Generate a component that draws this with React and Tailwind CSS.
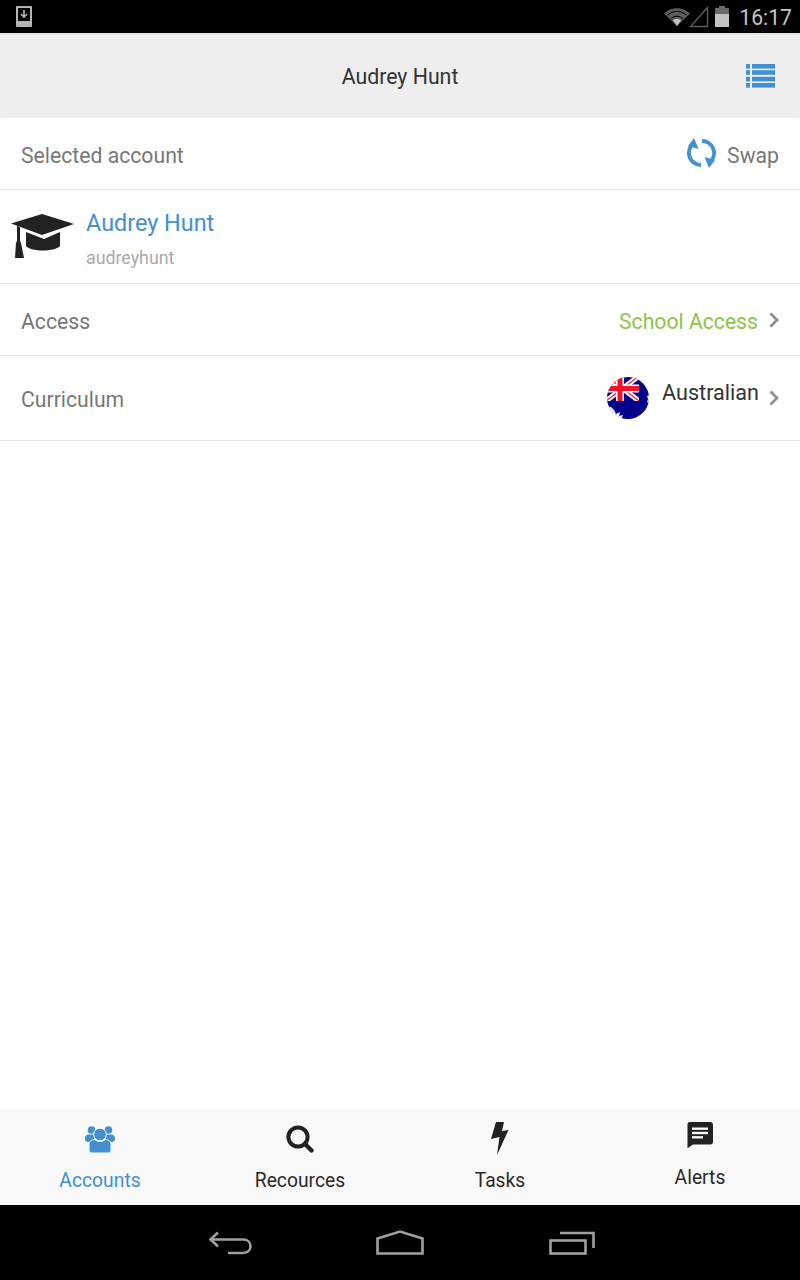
import React from "react";

const Chevron = () => (
  <svg width="12" height="18" viewBox="0 0 12 18" className="block">
    <path d="M2.5 2.5 L9 9 L2.5 15.5" fill="none" stroke="#8f8f8f" strokeWidth="2.8" />
  </svg>
);

const Flag = () => (
  <svg width="44" height="44" viewBox="0 0 44 44" className="block">
    <defs>
      <clipPath id="c"><circle cx="22" cy="22" r="21" /></clipPath>
      <clipPath id="j"><rect x="0" y="0" width="33" height="25" /></clipPath>
    </defs>
    <g clipPath="url(#c)">
      <rect width="44" height="44" fill="#00008b" />
      <g clipPath="url(#j)">
        <path d="M0 0 L33 25 M33 0 L0 25" stroke="#fff" strokeWidth="5" />
        <path d="M0 0 L33 25 M33 0 L0 25" stroke="#f0132a" strokeWidth="1.2" />
        <path d="M14 0 V25 M0 12.5 H33" stroke="#fff" strokeWidth="8" />
        <path d="M14 0 V25 M0 12.5 H33" stroke="#f0132a" strokeWidth="5" />
      </g>
      <path d="M0 30 L5 31 L8 34 L10 38 L14 36 L13 40 L17 39 L15 44 H0 Z" fill="#fff" />
      <path d="M44 19 L41 20 L42 23 L41 26 L44 27 Z" fill="#fff" />
    </g>
  </svg>
);

const Cap = () => (
  <svg width="64" height="45" viewBox="0 0 64 45" className="block">
    <path d="M31 0 L63 10 L31 21 L0 9.5 Z" fill="#222" />
    <path d="M15 18 L33 25 L49 18 V32 C44 38 20 38 15 32 Z" fill="#222" />
    <path d="M6 12 L9 13 V27 L10 29 L13 44 H4 L5 29 L6 27 Z" fill="#222" />
  </svg>
);

const Sync = () => (
  <svg width="31" height="30" viewBox="0 0 31 30" className="block">
    <path d="M15 27 A12 12 0 0 1 7 6" fill="none" stroke="#428fd1" strokeWidth="4" />
    <path d="M16 3 A12 12 0 0 1 24 24" fill="none" stroke="#428fd1" strokeWidth="4" />
    <path d="M8 0 L12.5 11 L2 8 Z" fill="#428fd1" />
    <path d="M23 30 L18.5 19 L29 22 Z" fill="#428fd1" />
  </svg>
);

const ListIcon = () => (
  <svg width="29" height="24" viewBox="0 0 29 24" className="block">
    <g fill="#428fd1">
      <rect x="0" y="0" width="4" height="4.6" />
      <rect x="6" y="0" width="23" height="4.6" />
      <rect x="0" y="6.2" width="4" height="4.6" />
      <rect x="6" y="6.2" width="23" height="4.6" />
      <rect x="0" y="12.8" width="4" height="4.6" />
      <rect x="6" y="12.8" width="23" height="4.6" />
      <rect x="0" y="19" width="4" height="4.6" />
      <rect x="6" y="19" width="23" height="4.6" />
    </g>
  </svg>
);

const People = () => (
  <svg width="30" height="28" viewBox="0 0 30 28" className="block">
    <g fill="#428fd1">
      <circle cx="6.5" cy="5" r="3.8" />
      <circle cx="23.5" cy="5" r="3.8" />
      <path d="M0 13.5 C0 10 2 9.5 5 9.5 H9 V17 H3 C1 17 0 15.5 0 13.5 Z" />
      <path d="M30 13.5 C30 10 28 9.5 25 9.5 H21 V17 H27 C29 17 30 15.5 30 13.5 Z" />
    </g>
    <circle cx="15" cy="9.5" r="6.3" fill="#428fd1" stroke="#f9f9f9" strokeWidth="1" />
    <path d="M4 19 C4 16 7 14.5 9.5 14.5 C12 17 18 17 20.5 14.5 C23 14.5 26 16 26 19 V25 C26 27 25 28 23 28 H7 C5 28 4 27 4 25 Z" fill="#428fd1" stroke="#f9f9f9" strokeWidth="1" />
  </svg>
);

const Search = () => (
  <svg width="28" height="28" viewBox="0 0 28 28" className="block">
    <circle cx="12" cy="12" r="9.6" fill="none" stroke="#222" strokeWidth="4" />
    <path d="M19 19 L25.5 25.5" stroke="#222" strokeWidth="4.4" strokeLinecap="round" />
  </svg>
);

const Bolt = () => (
  <svg width="18" height="33" viewBox="0 0 18 33" className="block">
    <path d="M5 0 H13 L11 9 L17.5 8 L6 33 L8.5 15 L0 17 Z" fill="#222" />
  </svg>
);

const Chat = () => (
  <svg width="26" height="26" viewBox="0 0 26 26" className="block">
    <path d="M3 0 H23.5 C25 0 26 1 26 3 V20 C26 21.5 25 22.5 23.5 22.5 H6 L1 26 H0.5 V3 C0.5 1 1 0 3 0 Z" fill="#222" />
    <rect x="5" y="5.5" width="16" height="2.4" fill="#f9f9f9" />
    <rect x="5" y="9.8" width="16" height="2.4" fill="#f9f9f9" />
    <rect x="5" y="14.1" width="11" height="2.4" fill="#f9f9f9" />
  </svg>
);

const Tab = ({ icon, label, color, top, gap }) => (
  <div className={`flex-1 flex flex-col items-center ${top}`}>
    <div className="h-[37px] flex items-end justify-center">{icon}</div>
    <div className={`text-[19.3px] leading-[22px] ${gap} ${color}`}>{label}</div>
  </div>
);

export default function App() {
  return (
    <div className="w-[800px] h-[1280px] flex flex-col bg-white overflow-hidden font-['Roboto',sans-serif]">
      {/* status bar */}
      <div className="h-[33px] bg-black flex items-center justify-between pl-[16px] pr-[8px]">
        <svg width="16" height="21" viewBox="0 0 16 21" className="block">
          <rect x="0" y="0" width="16" height="21" rx="1" fill="#b5b5b5" />
          <rect x="2" y="2" width="12" height="13" fill="#000" />
          <path d="M8 4 V10 M5 8 L8 11 L11 8" stroke="#b5b5b5" strokeWidth="1.6" fill="none" />
        </svg>
        <div className="flex items-center">
          <svg width="26" height="20" viewBox="0 0 26 20" className="block">
            <path d="M0 6.5 A19 19 0 0 1 26 6.5 L13 19 Z" fill="#5c5c5c" />
            <path d="M3.5 8 A14 14 0 0 1 22.5 8" fill="none" stroke="#000" strokeWidth="1" />
            <path d="M7 11.5 A9 9 0 0 1 19 11.5" fill="none" stroke="#000" strokeWidth="1" />
            <path d="M9 13.2 A6 6 0 0 1 17 13.2 L13 19 Z" fill="#c4c4c4" />
          </svg>
          <svg width="20" height="22" viewBox="0 0 20 22" className="block ml-[-1px]">
            <path d="M18.5 1.5 V20.5 H1.5 Z" fill="none" stroke="#5c5c5c" strokeWidth="1.4" />
          </svg>
          <svg width="14" height="21" viewBox="0 0 14 21" className="block ml-[6px]">
            <rect x="4" y="0" width="6" height="2" fill="#6a6a6a" />
            <rect x="0" y="2" width="14" height="6" fill="#6a6a6a" />
            <rect x="0" y="8" width="14" height="13" fill="#c4c4c4" />
          </svg>
          <span className="ml-[10px] text-[21.2px] leading-[33px] text-[#c4c4c4] pt-[1px]">16:17</span>
        </div>
      </div>
      {/* header */}
      <div className="relative h-[85px] bg-[#eeeeee] flex items-center justify-center shadow-[inset_0_2px_2px_-1px_rgba(0,0,0,0.08)]">
        <span className="text-[21.3px] text-[#333333] mt-[3px]">Audrey Hunt</span>
        <div className="absolute right-[25px] top-[31px]"><ListIcon /></div>
      </div>
      {/* selected */}
      <div className="h-[72px] border-b border-[#e6e6e6] flex items-center justify-between pl-[21px] pr-[21px]">
        <span className="text-[21.2px] text-[#777777] mt-[4px]">Selected account</span>
        <div className="flex items-center gap-[10px]">
          <div className="ml-[-1px]"><Sync /></div>
          <span className="text-[21.2px] text-[#777777] mt-[4px]">Swap</span>
        </div>
      </div>
      {/* profile */}
      <div className="h-[94px] border-b border-[#e6e6e6] flex items-start pl-[11px]">
        <div className="mt-[24px]"><Cap /></div>
        <div className="ml-[11px] mt-[18px]">
          <div className="text-[23.4px] leading-[30px] text-[#428fd1]">Audrey Hunt</div>
          <div className="text-[17.8px] leading-[22px] mt-[9px] text-[#aaaaaa]">audreyhunt</div>
        </div>
      </div>
      {/* access */}
      <div className="h-[72px] border-b border-[#e6e6e6] flex items-center justify-between pl-[21px] pr-[20px]">
        <span className="text-[21.2px] text-[#777777] mt-[4px]">Access</span>
        <div className="flex items-center gap-[10px]">
          <span className="text-[21.2px] text-[#8fc34a] mt-[4px]">School Access</span>
          <div className="mt-[1px]"><Chevron /></div>
        </div>
      </div>
      {/* curriculum */}
      <div className="h-[85px] border-b border-[#e6e6e6] flex items-center justify-between pl-[21px] pr-[20px]">
        <span className="text-[21.2px] text-[#777777] mt-[4px]">Curriculum</span>
        <div className="flex items-center">
          <Flag />
          <span className="ml-[12px] mt-[-9px] text-[21.6px] text-[#333333]">Australian</span>
          <div className="ml-[9px] mt-[-1px]"><Chevron /></div>
        </div>
      </div>
      <div className="flex-1" />
      {/* tabs */}
      <div className="h-[96px] bg-[#f9f9f9] flex">
        <Tab icon={<People />} label="Accounts" color="text-[#428fd1]" top="mt-[7px]" gap="mt-[17px]" />
        <Tab icon={<Search />} label="Recources" color="text-[#2a2a2a]" top="mt-[7px]" gap="mt-[17px]" />
        <Tab icon={<Bolt />} label="Tasks" color="text-[#2a2a2a]" top="mt-[9px]" gap="mt-[15px]" />
        <Tab icon={<Chat />} label="Alerts" color="text-[#2a2a2a]" top="mt-[2px]" gap="mt-[19px]" />
      </div>
      {/* nav */}
      <div className="h-[75px] bg-black flex items-center pl-[208px]">
        <svg width="44" height="24" viewBox="0 0 44 24" className="block">
          <path d="M10 1.5 L2.5 8.5 L10 15.5 M2.5 8.5 H35 C45 8.5 45 22 35 22 H20" fill="none" stroke="#a0a0a0" strokeWidth="2.6" />
        </svg>
        <svg width="48" height="25" viewBox="0 0 48 25" className="block ml-[124px]">
          <path d="M1.5 8.5 L24 1.5 L46.5 8.5 V23.5 H1.5 Z" fill="none" stroke="#a0a0a0" strokeWidth="2.6" />
        </svg>
        <svg width="46" height="24" viewBox="0 0 46 24" className="block ml-[125px]">
          <path d="M11 2 H44.5 V17" fill="none" stroke="#a0a0a0" strokeWidth="2.6" />
          <rect x="1.5" y="9.5" width="35" height="13" fill="none" stroke="#a0a0a0" strokeWidth="2.6" />
        </svg>
      </div>
    </div>
  );
}
